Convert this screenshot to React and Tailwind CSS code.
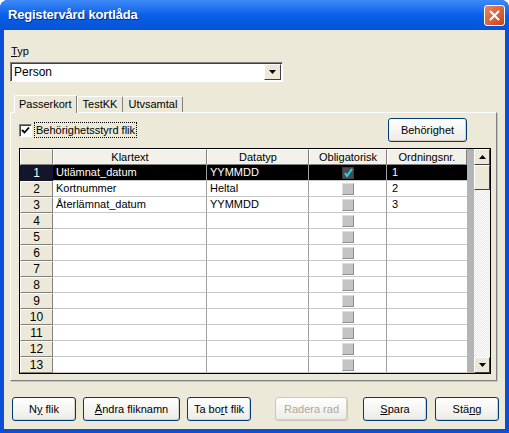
import React from "react";

const cols = [
  { key: "klartext", label: "Klartext", w: "w-[154px]" },
  { key: "datatyp", label: "Datatyp", w: "w-[102px]" },
  { key: "oblig", label: "Obligatorisk", w: "w-[78px]" },
  { key: "ordning", label: "Ordningsnr.", w: "w-[80px]" },
];

const rows = [
  { klartext: "Utlämnat_datum", datatyp: "YYMMDD", oblig: true, ordning: "1" },
  { klartext: "Kortnummer", datatyp: "Heltal", oblig: false, ordning: "2" },
  { klartext: "Återlämnat_datum", datatyp: "YYMMDD", oblig: false, ordning: "3" },
  ...Array.from({ length: 10 }, () => ({ klartext: "", datatyp: "", oblig: false, ordning: "" })),
];

function XpButton({ children, disabled, className = "" }) {
  return (
    <button
      className={`h-[24px] rounded-[3px] border text-[11px] bg-linear-to-b from-[#ffffff] to-[#ecebe6] shadow-[inset_-1px_-1px_0_#d6d0c5] ${
        disabled ? "border-[#c9c7ba] text-[#aca899]" : "border-[#003c74] text-black"
      } ${className}`}
    >
      {children}
    </button>
  );
}

function GridCheck({ selected }) {
  if (selected) {
    return (
      <svg width="12" height="12" viewBox="0 0 12 12">
        <rect x="0" y="0" width="12" height="12" fill="#3c3c3c" />
        <rect x="1" y="1" width="10" height="10" fill="#4a4a4a" />
        <path d="M3 6 L5 9 L10 2" stroke="#29d3e6" strokeWidth="2" fill="none" />
      </svg>
    );
  }
  return (
    <div className="w-[12px] h-[12px] bg-[#c4c4c4] border-t border-l border-[#dedede] border-r-[#8f8f8f] border-b-[#8f8f8f] border-r border-b" />
  );
}

function Grid() {
  return (
    <div className="w-[472px] h-[226px] border border-black flex bg-white">
      <div className="flex flex-col">
        <div className="flex h-[16px]">
          <div className="w-[33px] h-[16px] bg-[#ece9d8] border-t border-l border-white border-r border-b border-r-[#808080] border-b-[#808080]" />
          {cols.map((c) => (
            <div
              key={c.key}
              className={`${c.w} h-[16px] bg-[#f3f2ea] border-t border-l border-white border-r border-b border-r-[#808080] border-b-[#808080] text-[11px] leading-[14px] text-center`}
            >
              {c.label}
            </div>
          ))}
        </div>
        {rows.map((r, i) => {
          const sel = i === 0;
          return (
            <div key={i} className={`flex h-[16px] ${sel ? "bg-black text-white" : ""}`}>
              <div
                className={`w-[33px] h-[16px] text-[12px] leading-[15px] text-center border-t border-l border-r border-b ${
                  sel
                    ? "bg-[#14142a] text-white border-[#14142a]"
                    : "bg-[#ece9d8] border-white border-r-[#808080] border-b-[#808080]"
                }`}
              >
                {i + 1}
              </div>
              <div className="w-[154px] h-[16px] border-r border-b border-r-[#a0a0a0] border-b-[#c8c8c8] text-[11px] leading-[15px] pl-[3px]">
                {r.klartext}
              </div>
              <div className="w-[102px] h-[16px] border-r border-b border-r-[#a0a0a0] border-b-[#c8c8c8] text-[11px] leading-[15px] pl-[3px]">
                {r.datatyp}
              </div>
              <div className="w-[78px] h-[16px] border-r border-b border-r-[#a0a0a0] border-b-[#c8c8c8] flex items-center justify-center">
                <GridCheck selected={sel && r.oblig} />
              </div>
              <div className="w-[80px] h-[16px] border-b border-b-[#c8c8c8] text-[11px] leading-[15px] pl-[5px]">
                {r.ordning}
              </div>
            </div>
          );
        })}
      </div>
      <div className="w-[7px] bg-[#b4b4b4]" />
      <div className="w-[16px] flex flex-col bg-[repeating-conic-gradient(#ffffff_0%_25%,#ece9d8_0%_50%)] bg-[length:2px_2px]">
        <div className="h-[16px] bg-[#ece9d8] border-t border-l border-white border-r border-b border-r-[#404040] border-b-[#404040] flex items-center justify-center">
          <svg width="7" height="4" viewBox="0 0 7 4"><path d="M3.5 0 L7 4 L0 4 Z" fill="#000" /></svg>
        </div>
        <div className="h-[25px] bg-[#ece9d8] border-t border-l border-white border-r border-b border-r-[#404040] border-b-[#404040]" />
        <div className="flex-1" />
        <div className="h-[16px] bg-[#ece9d8] border-t border-l border-white border-r border-b border-r-[#404040] border-b-[#404040] flex items-center justify-center">
          <svg width="7" height="4" viewBox="0 0 7 4"><path d="M0 0 L7 0 L3.5 4 Z" fill="#000" /></svg>
        </div>
      </div>
    </div>
  );
}

export default function App() {
  return (
    <div className="w-[509px] h-[433px] bg-[#0a4fd6] rounded-t-[8px] flex flex-col overflow-hidden font-['Liberation_Sans',Arial,sans-serif]">
      {/* Titelrad */}
      <div className="h-[30px] flex items-center justify-between pl-[8px] pr-[4px] bg-linear-to-b from-[#3d8bf8] via-[#0a5ee8] to-[#0453d4]">
        <span className="text-white font-bold text-[13px] tracking-[-0.2px] [text-shadow:1px_1px_0_#0a2a80]">
          Registervård kortlåda
        </span>
        <div className="w-[21px] h-[21px] rounded-[3px] border border-white bg-linear-to-br from-[#e8865c] to-[#c9401c] flex items-center justify-center">
          <svg width="11" height="11" viewBox="0 0 11 11">
            <path d="M1.5 1.5 L9.5 9.5 M9.5 1.5 L1.5 9.5" stroke="#fff" strokeWidth="2" strokeLinecap="round" />
          </svg>
        </div>
      </div>

      {/* Innehåll */}
      <div className="flex-1 mx-[4px] mb-[4px] bg-[#ece9d8] flex flex-col pt-[14px] pl-[6px] pb-[8px] text-black">
        <div className="text-[11px] leading-[14px] pl-[1px]">
          <span className="underline">T</span>yp
        </div>
        <div className="mt-[4px] w-[273px] h-[20px] bg-white border border-t-[#7f7f7f] border-l-[#7f7f7f] border-r-white border-b-white shadow-[inset_1px_1px_0_#404040] flex items-center justify-between">
          <span className="text-[12px] pl-[3px]">Person</span>
          <div className="w-[17px] h-[16px] mr-[1px] bg-[#ece9d8] border border-t-white border-l-white border-r-[#404040] border-b-[#404040] flex items-center justify-center">
            <svg width="7" height="4" viewBox="0 0 7 4"><path d="M0 0 L7 0 L3.5 4 Z" fill="#000" /></svg>
          </div>
        </div>

        {/* Flikar */}
        <div className="mt-[13px] flex items-end h-[17px] pl-[4px]">
          <div className="relative z-10 -mb-[1px] h-[18px] px-[4px] bg-[#ece9d8] border-t border-l border-r border-t-white border-l-white border-r-[#808080] rounded-t-[2px] text-[11px] leading-[16px]">
            Passerkort
          </div>
          <div className="h-[16px] px-[5px] border-t border-l border-r border-t-white border-l-white border-r-[#808080] rounded-t-[2px] text-[11px] leading-[15px]">
            TestKK
          </div>
          <div className="h-[16px] px-[5px] border-t border-r border-t-white border-r-[#808080] rounded-t-[2px] text-[11px] leading-[15px]">
            Utvsamtal
          </div>
        </div>
        <div className="w-[487px] h-[269px] border border-t-white border-l-white border-r-[#808080] border-b-[#808080] shadow-[1px_1px_0_#c8c5b8] pl-[8px] pt-[5px] flex flex-col">
          <div className="w-[472px] flex items-center justify-between pr-[24px]">
            <div className="flex items-center gap-[3px]">
              <div className="w-[13px] h-[13px] bg-white border border-t-[#808080] border-l-[#808080] border-r-white border-b-white shadow-[inset_1px_1px_0_#404040] flex items-center justify-center">
                <svg width="9" height="9" viewBox="0 0 9 9">
                  <path d="M1 4 L3.5 6.5 L8 1.5" stroke="#000" strokeWidth="1.8" fill="none" />
                </svg>
              </div>
              <span className="text-[11px] leading-[14px] px-[1px] outline-1 outline-dotted outline-black">
                Behörighetsstyrd flik
              </span>
            </div>
            <XpButton className="w-[79px]">Behörighet</XpButton>
          </div>
          <div className="mt-[6px]">
            <Grid />
          </div>
        </div>

        {/* Knappar */}
        <div className="mt-[16px] flex items-center pl-[2px]">
          <XpButton className="w-[64px]">
            N<span className="underline">y</span> flik
          </XpButton>
          <XpButton className="w-[97px] ml-[7px]">
            <span className="underline">Ä</span>ndra fliknamn
          </XpButton>
          <XpButton className="w-[64px] ml-[7px]">
            Ta bo<span className="underline">r</span>t flik
          </XpButton>
          <XpButton disabled className="w-[73px] ml-[24px]">
            Radera rad
          </XpButton>
          <XpButton className="w-[64px] ml-[15px]">
            <span className="underline">S</span>para
          </XpButton>
          <XpButton className="w-[64px] ml-[8px]">
            Stä<span className="underline">n</span>g
          </XpButton>
        </div>
      </div>
    </div>
  );
}
